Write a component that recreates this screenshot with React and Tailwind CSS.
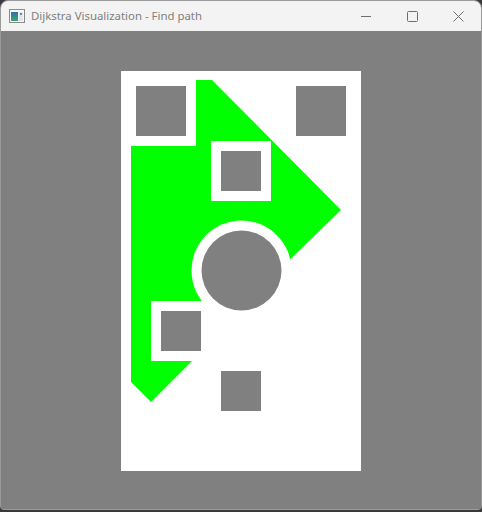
import React from "react";

function AppIcon() {
  return (
    <svg width="16" height="14" viewBox="0 0 16 14">
      <defs>
        <linearGradient id="g1" x1="0" y1="0" x2="0" y2="1">
          <stop offset="0" stopColor="#2f6fb5" />
          <stop offset="1" stopColor="#3aa86a" />
        </linearGradient>
      </defs>
      <rect x="0.5" y="0.5" width="15" height="13" fill="#f8f8f8" stroke="#8a8a8a" />
      <rect x="2" y="3" width="7" height="9" fill="url(#g1)" />
      <rect x="10" y="3" width="4" height="9" fill="#dfe6ea" />
      <rect x="11" y="4" width="2" height="2" fill="#7a8a90" />
    </svg>
  );
}

export default function App() {
  return (
    <div className="w-[482px] h-[512px] bg-[#3a3a3a] overflow-hidden">
      <div className="w-[482px] h-[510px] flex flex-col rounded-t-[8px] rounded-b-[4px] overflow-hidden border border-[#9a9a9a] bg-[#808080]">
        <div
          className="h-[30px] shrink-0 bg-[#f3f3f3] flex items-center text-[#808080]"
          style={{ fontFamily: '"Segoe UI", "Noto Sans", "Open Sans", sans-serif' }}
        >
          <div className="pl-[8px] pr-[6px] flex items-center">
            <AppIcon />
          </div>
          <span className="text-[11.4px] leading-none pb-[1px]">Dijkstra Visualization - Find path</span>
          <div className="ml-auto flex items-center h-full">
            <div className="w-[46px] h-full flex items-center justify-center">
              <svg width="10" height="10" viewBox="0 0 10 10">
                <line x1="0" y1="5.5" x2="10" y2="5.5" stroke="#6e6e6e" strokeWidth="1" />
              </svg>
            </div>
            <div className="w-[46px] h-full flex items-center justify-center">
              <svg width="11" height="11" viewBox="0 0 11 11">
                <rect x="0.5" y="0.5" width="10" height="10" rx="1" fill="none" stroke="#6e6e6e" strokeWidth="1" />
              </svg>
            </div>
            <div className="w-[46px] h-full flex items-center justify-center">
              <svg width="11" height="11" viewBox="0 0 11 11">
                <path d="M0.5 0.5 L10.5 10.5 M10.5 0.5 L0.5 10.5" stroke="#6e6e6e" strokeWidth="1" />
              </svg>
            </div>
          </div>
        </div>
        <div className="flex-1 flex justify-center pt-[40px] bg-[#808080]">
          <svg width="240" height="400" viewBox="0 0 240 400" className="block" shapeRendering="crispEdges">
            <rect x="0" y="0" width="240" height="400" fill="#ffffff" />
            <polygon
              points="75,9 91,9 220,139 120,236 84,236 84,277 30,331 10,311 10,74 75,74"
              fill="#00ff00"
              shapeRendering="auto"
            />
            <rect x="5" y="5" width="70" height="70" fill="#ffffff" />
            <rect x="165" y="5" width="70" height="70" fill="#ffffff" />
            <rect x="90" y="70" width="60" height="60" fill="#ffffff" />
            <circle cx="120.5" cy="199.5" r="50" fill="#ffffff" shapeRendering="auto" />
            <rect x="30" y="230" width="60" height="60" fill="#ffffff" />
            <rect x="15" y="15" width="50" height="50" fill="#808080" />
            <rect x="175" y="15" width="50" height="50" fill="#808080" />
            <rect x="100" y="80" width="40" height="40" fill="#808080" />
            <circle cx="120.5" cy="199.5" r="40" fill="#808080" shapeRendering="auto" />
            <rect x="40" y="240" width="40" height="40" fill="#808080" />
            <rect x="100" y="300" width="40" height="40" fill="#808080" />
          </svg>
        </div>
      </div>
    </div>
  );
}
